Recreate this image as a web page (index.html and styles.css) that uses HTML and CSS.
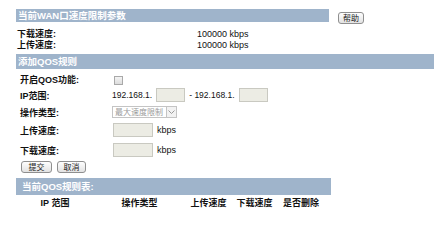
FILE: index.html
```html
<!DOCTYPE html>
<html lang="zh-CN">
<head>
  <meta charset="UTF-8" />
  <title>QOS</title>
  <link rel="stylesheet" href="styles.css">
</head>
<body>
  <div class="page">
    <!-- WAN speed -->
    <div class="top">
      <div class="bar bar-wan">当前WAN口速度限制参数</div>
      <button class="btn btn-help">帮助</button>
    </div>
    <div class="params">
      <div class="param"><span class="label">下载速度:</span><span>100000 kbps</span></div>
      <div class="param"><span class="label">上传速度:</span><span>100000 kbps</span></div>
    </div>

    <!-- add rule -->
    <div class="bar bar-wide">添加QOS规则</div>
    <div class="form">
      <div class="row row-check">
        <span class="label">开启QOS功能:</span>
        <span class="check"></span>
      </div>
      <div class="row row-ip">
        <span class="label">IP范围:</span>
        <span class="ip">192.168.1.</span>
        <input class="field field-ip" type="text" disabled>
        <span class="ip dash">- 192.168.1.</span>
        <input class="field field-ip" type="text" disabled>
      </div>
      <div class="row row-type">
        <span class="label">操作类型:</span>
        <div class="select"><span class="select-text">最大速度限制</span><span class="arrow"><svg width="7" height="4" viewBox="0 0 7 4"><path d="M0.5 0.5 L3.5 3.5 L6.5 0.5" fill="none" stroke="#9a9a9a" stroke-width="1"/></svg></span></div>
      </div>
      <div class="row row-up">
        <span class="label">上传速度:</span>
        <input class="field field-speed" type="text" disabled>
        <span class="unit">kbps</span>
      </div>
      <div class="row row-down">
        <span class="label">下载速度:</span>
        <input class="field field-speed" type="text" disabled>
        <span class="unit">kbps</span>
      </div>
      <div class="actions">
        <button class="btn btn-submit">提交</button>
        <button class="btn btn-cancel">取消</button>
      </div>
    </div>

    <!-- rule list -->
    <div class="bar bar-list">当前QOS规则表:</div>
    <div class="list-head">
      <span>IP 范围</span>
      <span>操作类型</span>
      <span>上传速度</span>
      <span>下载速度</span>
      <span>是否删除</span>
    </div>
  </div>
</body>
</html>
```

FILE: styles.css
```css
* {
  margin: 0;
  padding: 0;
  box-sizing: border-box;
}

body {
  background: #fff;
  color: #111;
  font-family: "Liberation Sans", "Noto Sans CJK SC", sans-serif;
  font-size: 9px;
}

.page {
  padding: 9px 0 0 16px;
}

/* Section bars */
.bar {
  background: #9fb4cb;
  color: #fff;
  font-weight: bold;
  font-size: 9.5px;
  padding-left: 2px;
  white-space: nowrap;
}

.bar-wan {
  width: 313px;
  height: 13px;
  line-height: 13px;
}

.bar-wide {
  width: 418px;
  height: 15px;
  line-height: 15px;
  margin-top: 3px;
}

.bar-list {
  width: 315px;
  height: 17px;
  line-height: 17px;
  padding-left: 6px;
  margin-top: 5px;
}

.top {
  display: flex;
  align-items: flex-start;
}

/* Buttons */
.btn {
  height: 12px;
  font-family: "Noto Sans CJK SC", sans-serif;
  font-size: 8px;
  line-height: 10px;
  color: #222;
  border: 1px solid #8f8f8f;
  border-radius: 3px;
  background: linear-gradient(#fefefe, #e2e2e2);
}

.btn-help {
  width: 26px;
  margin: 3px 0 0 9px;
}

.btn-submit {
  width: 31px;
}

.btn-cancel {
  width: 29px;
  margin-left: 5px;
}

/* WAN params */
.params {
  padding: 5px 0 0 1px;
}

.param {
  display: grid;
  grid-template-columns: 180px auto;
  height: 11px;
  line-height: 11px;
}

.label {
  font-weight: bold;
}

/* Form */
.form {
  padding-left: 4px;
}

.row {
  display: flex;
  align-items: center;
}

.row .label {
  width: 92px;
  flex: none;
}

.row-check {
  height: 12px;
  margin-top: 4px;
}

.row-ip {
  height: 16px;
  margin-top: 2px;
}

.row-type {
  height: 14px;
  margin-top: 2px;
}

.row-up {
  height: 16px;
  margin-top: 3px;
}

.row-down {
  height: 16px;
  margin-top: 4px;
}

.check {
  width: 9px;
  height: 9px;
  margin: 2px 0 0 2px;
  border: 1px solid #a9a9a9;
  background: linear-gradient(#f4f4f4, #dcdcdc);
}

.ip {
  font-size: 8.5px;
}

.field {
  height: 14px;
  border: 1px solid #c9c9c1;
  background: #ecece4;
}

.field-ip {
  width: 29px;
  margin-left: 4px;
}

.dash {
  margin-left: 4px;
}

.field-speed {
  width: 40px;
  margin-left: 1px;
}

.unit {
  margin-left: 4px;
}

.select {
  display: flex;
  width: 65px;
  height: 12px;
  border: 1px solid #c4c4c4;
  background: #fff;
}

.select-text {
  flex: 1;
  font-family: "Noto Sans CJK SC", sans-serif;
  font-size: 8px;
  line-height: 10px;
  color: #9a9a9a;
  padding-left: 2px;
}

.arrow {
  width: 10px;
  border-left: 1px solid #c4c4c4;
  display: flex;
  align-items: center;
  justify-content: center;
  background: #f2f2f2;
}

.actions {
  display: flex;
  margin: 3px 0 0 1px;
}

/* Rule list header */
.list-head {
  display: grid;
  grid-template-columns: 78px 91px 47px 45px 48px;
  margin-top: 3px;
  height: 10px;
  line-height: 10px;
  font-weight: bold;
  text-align: center;
}
```
